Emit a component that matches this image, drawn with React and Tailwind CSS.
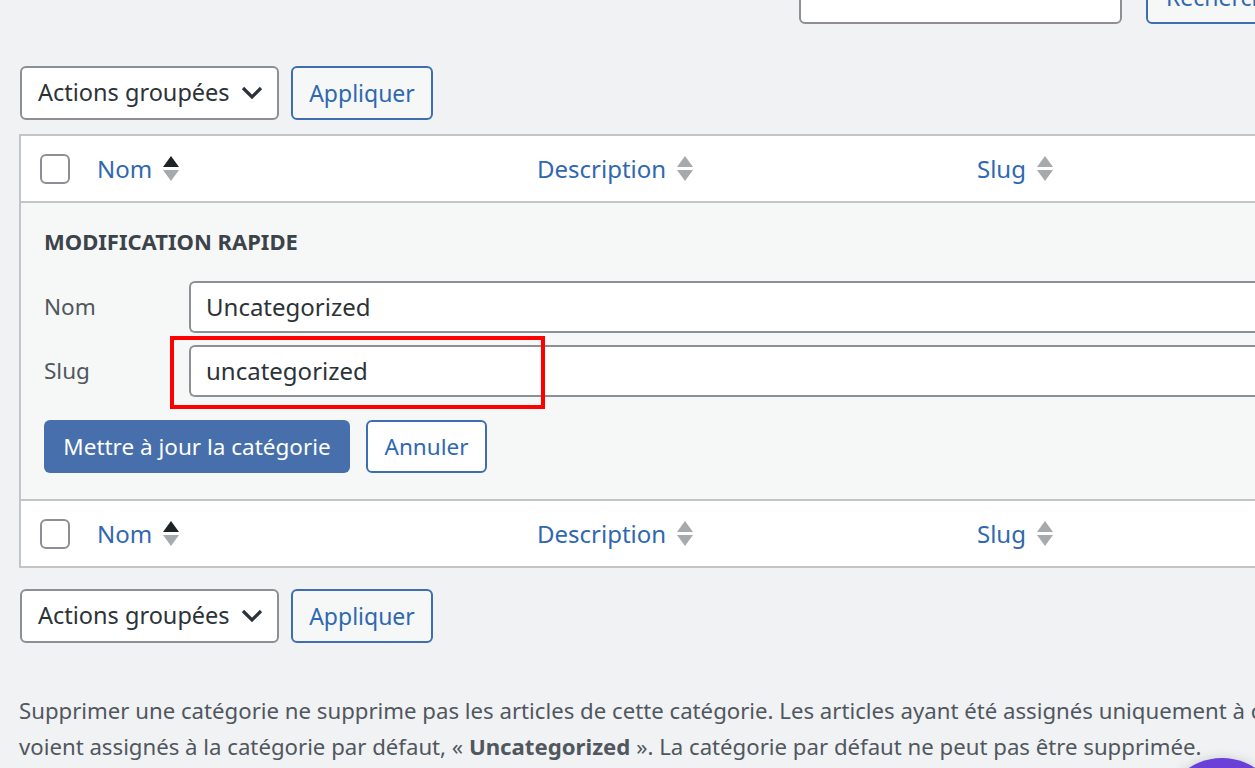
import React from 'react';

const font = { fontFamily: '"Noto Sans", "Open Sans", sans-serif' };

function SortArrows({ active }) {
  return (
    <span className="ml-[11px] flex flex-col gap-[3px]">
      <svg width="16" height="11" viewBox="0 0 16 11">
        <path d="M8 0 L16 11 L0 11 Z" fill={active ? '#1d2327' : '#a7aaad'} />
      </svg>
      <svg width="16" height="11" viewBox="0 0 16 11">
        <path d="M0 0 L16 0 L8 11 Z" fill="#a7aaad" />
      </svg>
    </span>
  );
}

function Checkbox() {
  return <span className="block h-[30px] w-[30px] rounded-[6px] border-2 border-[#8c8f94] bg-white" />;
}

function HeaderRow({ borderClass }) {
  return (
    <div className={`flex h-[67px] items-center bg-white ${borderClass}`}>
      <div className="w-[76px] pl-[19px]">
        <Checkbox />
      </div>
      <div className="flex w-[440px] items-center text-[24px] text-[#2f68b0]">
        Nom
        <SortArrows active />
      </div>
      <div className="flex w-[440px] items-center text-[24px] text-[#2f68b0]">
        Description
        <SortArrows />
      </div>
      <div className="flex items-center text-[24px] text-[#2f68b0]">
        Slug
        <SortArrows />
      </div>
    </div>
  );
}

function BulkActions() {
  return (
    <div className="flex gap-[12px] pl-[20px]">
      <div className="flex h-[54px] w-[259px] items-center justify-between whitespace-nowrap rounded-[6px] border-2 border-[#8c8f94] bg-white pl-[16px] pr-[14px] text-[23.5px] text-[#2c3338]">
        <span>Actions groupées</span>
        <svg width="22" height="14" viewBox="0 0 22 14">
          <path d="M2 2 L11 11 L20 2" fill="none" stroke="#2c3338" strokeWidth="3.2" />
        </svg>
      </div>
      <button className="flex h-[54px] w-[142px] items-center justify-center rounded-[6px] border-2 border-[#3f6db2] bg-[#f6f7f7] text-[23px] text-[#2f68b0]">
        Appliquer
      </button>
    </div>
  );
}

export default function App() {
  return (
    <div className="relative h-[768px] w-[1255px] overflow-hidden bg-[#f1f2f4]" style={font}>
      {/* search box */}
      <div className="-mt-[30px] ml-[799px] flex gap-[24px]">
        <div className="h-[54px] w-[323px] shrink-0 rounded-[6px] border-2 border-[#8c8f94] bg-white" />
        <button className="flex h-[54px] w-[180px] shrink-0 items-center rounded-[6px] border-2 border-[#3f6db2] bg-[#f6f7f7] pl-[18px] text-[23px] text-[#2f68b0]">
          Rechercher
        </button>
      </div>

      <div className="mt-[42px]">
        <BulkActions />
      </div>

      {/* table */}
      <div className="ml-[19px] mt-[14px] w-[1400px] border-2 border-[#c3c4c7] bg-white">
        <HeaderRow borderClass="border-b-2 border-[#c3c4c7]" />

        <div className="relative h-[296px] bg-[#f6f7f7] px-[23px] pt-[24px]">
          <div className="text-[22px] font-bold leading-[28px] text-[#3c434a]">MODIFICATION RAPIDE</div>

          <div className="mt-[26px] flex flex-col gap-[12px]">
            <div className="flex items-center">
              <span className="w-[145px] text-[22.5px] text-[#50575e]">Nom</span>
              <div className="flex h-[52px] flex-1 items-center rounded-l-[6px] border-2 border-r-0 border-[#8c8f94] bg-white pl-[15px] text-[24px] text-[#2c3338]">
                Uncategorized
              </div>
            </div>
            <div className="flex items-center">
              <span className="w-[145px] text-[22.5px] text-[#50575e]">Slug</span>
              <div className="flex h-[52px] flex-1 items-center rounded-l-[6px] border-2 border-r-0 border-[#8c8f94] bg-white pl-[15px] text-[24px] text-[#2c3338]">
                uncategorized
              </div>
            </div>
          </div>

          <div className="mt-[23px] flex gap-[16px]">
            <button className="flex h-[53px] w-[306px] items-center justify-center rounded-[6px] bg-[#466fab] text-[22.5px] text-white">
              Mettre à jour la catégorie
            </button>
            <button className="flex h-[53px] w-[121px] items-center justify-center rounded-[6px] border-2 border-[#3f6db2] bg-white text-[22.5px] text-[#2f68b0]">
              Annuler
            </button>
          </div>

          {/* red highlight */}
          <div className="absolute left-[149px] top-[133px] h-[73px] w-[375px] border-[4px] border-[#ff0000]" />
        </div>

        <HeaderRow borderClass="border-t-2 border-[#c3c4c7]" />
      </div>

      <div className="mt-[21px]">
        <BulkActions />
      </div>

      <p className="ml-[19px] mt-[50px] whitespace-nowrap text-[22.2px] leading-[36px] text-[#50575e]">
        Supprimer une catégorie ne supprime pas les articles de cette catégorie. Les articles ayant été assignés uniquement à cette catégorie se
        <br />
        voient assignés à la catégorie par défaut, « <strong className="font-bold">Uncategorized</strong> ». La catégorie par défaut ne peut pas être supprimée.
      </p>

      <div className="absolute left-[1162px] top-[758px] h-[120px] w-[120px] rounded-full bg-[#6a40d8] shadow-[0_0_12px_rgba(0,0,0,0.15)]" />
    </div>
  );
}
